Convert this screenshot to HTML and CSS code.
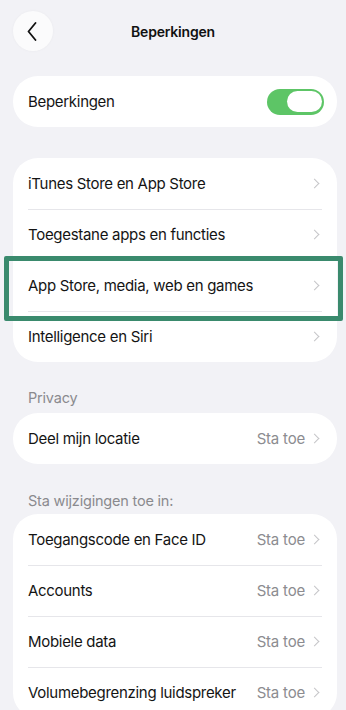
FILE: index.html
```html
<!DOCTYPE html>
<html lang="nl">
<head>
<meta charset="utf-8">
<title>Beperkingen</title>
<link rel="stylesheet" href="styles.css">
</head>
<body>
<div class="screen">
  <header class="nav">
    <button class="back" aria-label="Terug">
      <svg width="10" height="19" viewBox="0 0 10 19"><path d="M8.5 1 L1.5 9.5 L8.5 18" fill="none" stroke="#111" stroke-width="1.8" stroke-linecap="round" stroke-linejoin="round"/></svg>
    </button>
    <h1 class="title">Beperkingen</h1>
  </header>

  <section class="card first">
    <div class="row">
      <span class="label">Beperkingen</span>
      <span class="toggle"><span class="knob"></span></span>
    </div>
  </section>

  <section class="card">
    <div class="row"><span class="label">iTunes Store en App Store</span><span class="chev"></span></div>
    <div class="row"><span class="label">Toegestane apps en functies</span><span class="chev"></span></div>
    <div class="row highlighted"><span class="label">App Store, media, web en games</span><span class="chev"></span><span class="highlight"></span></div>
    <div class="row"><span class="label">Intelligence en Siri</span><span class="chev"></span></div>
  </section>

  <div class="section-head">Privacy</div>
  <section class="card">
    <div class="row"><span class="label">Deel mijn locatie</span><span class="value">Sta toe</span><span class="chev"></span></div>
  </section>

  <div class="section-head second">Sta wijzigingen toe in:</div>
  <section class="card">
    <div class="row"><span class="label">Toegangscode en Face ID</span><span class="value">Sta toe</span><span class="chev"></span></div>
    <div class="row"><span class="label">Accounts</span><span class="value">Sta toe</span><span class="chev"></span></div>
    <div class="row"><span class="label">Mobiele data</span><span class="value">Sta toe</span><span class="chev"></span></div>
    <div class="row"><span class="label">Volumebegrenzing luidspreker</span><span class="value">Sta toe</span><span class="chev"></span></div>
  </section>
</div>
</body>
</html>
```

FILE: styles.css
```css
html, body {
  margin: 0;
  padding: 0;
  background: #f2f2f6;
}
body {
  font-family: Inter, "Liberation Sans", sans-serif;
  color: #111;
  height: 710px;
  overflow: hidden;
}
.screen {
  display: flex;
  flex-direction: column;
  padding: 11px 9px 0 13px;
}
.nav {
  position: relative;
  display: flex;
  align-items: center;
  justify-content: center;
  height: 40px;
}
.back {
  position: absolute;
  left: 0;
  top: 0;
  width: 40px;
  height: 40px;
  border-radius: 50%;
  border: none;
  background: #fbfbfc;
  box-shadow: 0 0 3px rgba(0,0,0,0.04);
  display: flex;
  align-items: center;
  justify-content: center;
  padding: 0 2px 0 0;
}
.title {
  margin: 0 0 0 -4px;
  font-size: 14px;
  font-weight: 600;
  letter-spacing: -0.2px;
}
.card {
  background: #fff;
  border-radius: 25px;
  width: 324px;
}
.card.first {
  margin-top: 25px;
  margin-bottom: 31px;
}
.row {
  position: relative;
  height: 51px;
  display: flex;
  align-items: center;
  padding: 0 17px 0 15px;
  font-size: 15px;
  letter-spacing: -0.3px;
}
.row + .row::before {
  content: "";
  position: absolute;
  left: 15px;
  right: 15px;
  top: 0;
  height: 1px;
  background: #e6e6ea;
}
.label {
  flex: 1;
  color: #141414;
}
.value {
  color: #8c8c90;
  margin-right: 6px;
  letter-spacing: -0.2px;
}
.chev {
  width: 6px;
  height: 6px;
  border-top: 1.6px solid #c5c5c8;
  border-right: 1.6px solid #c5c5c8;
  transform: rotate(45deg);
  margin-right: 2px;
}
.toggle {
  width: 57px;
  height: 26px;
  border-radius: 13px;
  background: #5dc566;
  display: flex;
  align-items: center;
  justify-content: flex-end;
  padding: 0 2px;
  box-sizing: border-box;
  margin-right: -4px;
}
.knob {
  width: 35px;
  height: 21px;
  border-radius: 11px;
  background: #fff;
}
.highlight {
  position: absolute;
  left: -9px;
  top: -4px;
  width: 339px;
  height: 65px;
  box-sizing: border-box;
  border: 5px solid #3a8a6d;
  border-radius: 2px;
  pointer-events: none;
  z-index: 2;
}
.section-head {
  padding: 26px 0 5px 15px;
  height: 20px;
  line-height: 20px;
  font-size: 14.5px;
  color: #8a8a8e;
  letter-spacing: -0.2px;
}
.section-head.second {
  padding-top: 27px;
  padding-bottom: 3px;
}
```
